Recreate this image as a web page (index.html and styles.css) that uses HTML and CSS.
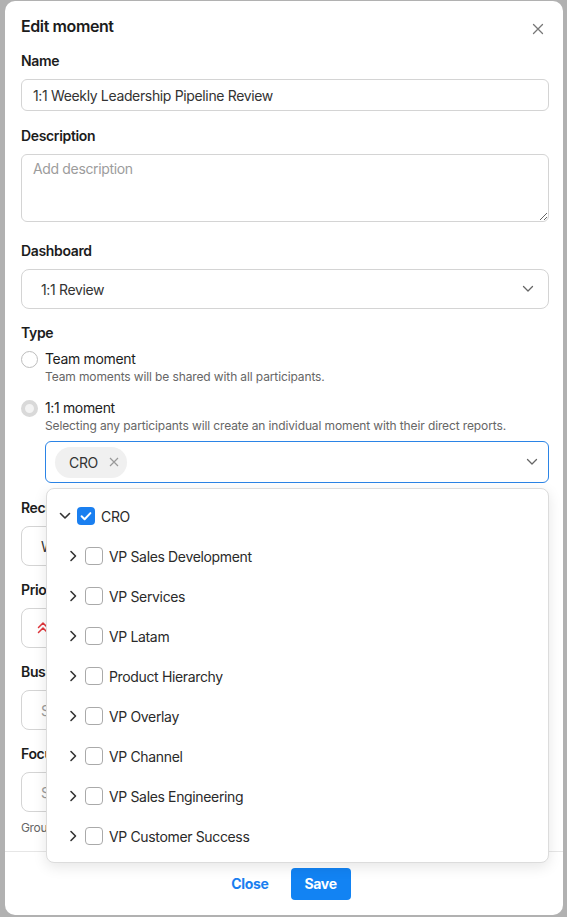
FILE: index.html
```html
<!DOCTYPE html>
<html>
<head>
<meta charset="utf-8">
<link rel="stylesheet" href="styles.css">
</head>
<body>
<div class="modal">
  <div class="content">
    <div class="header">
      <h2 class="title">Edit moment</h2>
      <span class="close"><svg width="12" height="12" viewBox="0 0 12 12"><path d="M1.5 1.5L10.5 10.5M10.5 1.5L1.5 10.5" stroke="#777" stroke-width="1.3" fill="none" stroke-linecap="round"/></svg></span>
    </div>

    <div class="field f-name">
      <div class="label">Name</div>
      <input class="input" value="1:1 Weekly Leadership Pipeline Review">
    </div>

    <div class="field f-desc">
      <div class="label">Description</div>
      <textarea class="textarea" placeholder="Add description"></textarea>
    </div>

    <div class="field f-dash">
      <div class="label">Dashboard</div>
      <div class="select">
        <span>1:1 Review</span>
        <svg class="chev" width="12" height="8" viewBox="0 0 12 8"><path d="M1.5 1.5L6 6L10.5 1.5" stroke="#666" stroke-width="1.3" fill="none" stroke-linecap="round" stroke-linejoin="round"/></svg>
      </div>
    </div>

    <div class="field f-type">
      <div class="label type-label">Type</div>
      <div class="radio-row">
        <span class="radio"></span>
        <div class="radio-text">
          <div class="radio-title">Team moment</div>
          <div class="radio-sub">Team moments will be shared with all participants.</div>
        </div>
      </div>
      <div class="radio-row second">
        <span class="radio disabled"></span>
        <div class="radio-text">
          <div class="radio-title">1:1 moment</div>
          <div class="radio-sub">Selecting any participants will create an individual moment with their direct reports.</div>
          <div class="multi-wrap">
            <div class="multi">
              <span class="chip">CRO <svg width="10" height="10" viewBox="0 0 10 10"><path d="M1 1L9 9M9 1L1 9" stroke="#999" stroke-width="1.2" fill="none"/></svg></span>
              <svg class="chev" width="12" height="8" viewBox="0 0 12 8"><path d="M1.5 1.5L6 6L10.5 1.5" stroke="#666" stroke-width="1.3" fill="none" stroke-linecap="round" stroke-linejoin="round"/></svg>
            </div>
            <div class="dropdown">
              <div class="opt root">
                <span class="tog"><svg width="12" height="8" viewBox="0 0 12 8"><path d="M1.5 1.5L6 6L10.5 1.5" stroke="#333" stroke-width="1.6" fill="none" stroke-linecap="round" stroke-linejoin="round"/></svg></span>
                <span class="cb checked"><svg width="18" height="18" viewBox="0 0 18 18"><path d="M4.6 9.3L7.6 12.2L13.4 6.1" stroke="#fff" stroke-width="2" fill="none" stroke-linecap="round" stroke-linejoin="round"/></svg></span>
                <span class="opt-text">CRO</span>
              </div>
              <div class="opt child"><span class="tog"><svg width="8" height="12" viewBox="0 0 8 12"><path d="M2 1.5L6.5 6L2 10.5" stroke="#333" stroke-width="1.6" fill="none" stroke-linecap="round" stroke-linejoin="round"/></svg></span><span class="cb"></span><span class="opt-text">VP Sales Development</span></div>
              <div class="opt child"><span class="tog"><svg width="8" height="12" viewBox="0 0 8 12"><path d="M2 1.5L6.5 6L2 10.5" stroke="#333" stroke-width="1.6" fill="none" stroke-linecap="round" stroke-linejoin="round"/></svg></span><span class="cb"></span><span class="opt-text">VP Services</span></div>
              <div class="opt child"><span class="tog"><svg width="8" height="12" viewBox="0 0 8 12"><path d="M2 1.5L6.5 6L2 10.5" stroke="#333" stroke-width="1.6" fill="none" stroke-linecap="round" stroke-linejoin="round"/></svg></span><span class="cb"></span><span class="opt-text">VP Latam</span></div>
              <div class="opt child"><span class="tog"><svg width="8" height="12" viewBox="0 0 8 12"><path d="M2 1.5L6.5 6L2 10.5" stroke="#333" stroke-width="1.6" fill="none" stroke-linecap="round" stroke-linejoin="round"/></svg></span><span class="cb"></span><span class="opt-text">Product Hierarchy</span></div>
              <div class="opt child"><span class="tog"><svg width="8" height="12" viewBox="0 0 8 12"><path d="M2 1.5L6.5 6L2 10.5" stroke="#333" stroke-width="1.6" fill="none" stroke-linecap="round" stroke-linejoin="round"/></svg></span><span class="cb"></span><span class="opt-text">VP Overlay</span></div>
              <div class="opt child"><span class="tog"><svg width="8" height="12" viewBox="0 0 8 12"><path d="M2 1.5L6.5 6L2 10.5" stroke="#333" stroke-width="1.6" fill="none" stroke-linecap="round" stroke-linejoin="round"/></svg></span><span class="cb"></span><span class="opt-text">VP Channel</span></div>
              <div class="opt child"><span class="tog"><svg width="8" height="12" viewBox="0 0 8 12"><path d="M2 1.5L6.5 6L2 10.5" stroke="#333" stroke-width="1.6" fill="none" stroke-linecap="round" stroke-linejoin="round"/></svg></span><span class="cb"></span><span class="opt-text">VP Sales Engineering</span></div>
              <div class="opt child"><span class="tog"><svg width="8" height="12" viewBox="0 0 8 12"><path d="M2 1.5L6.5 6L2 10.5" stroke="#333" stroke-width="1.6" fill="none" stroke-linecap="round" stroke-linejoin="round"/></svg></span><span class="cb"></span><span class="opt-text">VP Customer Success</span></div>
            </div>
          </div>
        </div>
      </div>
    </div>

    <div class="field f-lg">
      <div class="label">Recurrence</div>
      <div class="select"><span>W</span></div>
    </div>
    <div class="field f-lg">
      <div class="label">Priority</div>
      <div class="select"><svg class="prio" width="12" height="14" viewBox="0 0 12 14"><path d="M1.5 6.5L6 2L10.5 6.5M1.5 11.5L6 7L10.5 11.5" stroke="#e0353b" stroke-width="1.5" fill="none" stroke-linecap="round" stroke-linejoin="round"/></svg></div>
    </div>
    <div class="field f-lg">
      <div class="label">Business</div>
      <div class="select"><span class="ph">S</span></div>
    </div>
    <div class="field f-focus">
      <div class="label">Focus</div>
      <div class="select"><span class="ph">S</span></div>
    </div>
    <div class="helper">Group</div>
  </div>

  <div class="footer">
    <button class="btn btn-link">Close</button>
    <button class="btn btn-primary">Save</button>
  </div>
</div>
</body>
</html>
```

FILE: styles.css
```css
* { box-sizing: border-box; }

html, body {
  margin: 0;
  padding: 0;
}

body {
  background: #b1b1b1;
  font-family: Inter, "Noto Sans", "Liberation Sans", sans-serif;
  color: #1c1c1c;
  height: 917px;
  overflow: hidden;
  letter-spacing: -0.35px;
}

.modal {
  margin: 1px 4px 0 5px;
  width: 558px;
  height: 914px;
  background: #fff;
  border-radius: 10px;
  display: flex;
  flex-direction: column;
}

.content {
  flex: 1;
  min-height: 0;
  padding: 13px 14px 0 16px;
}

.header {
  display: flex;
  align-items: center;
  justify-content: space-between;
  margin-bottom: 13px;
}

.title {
  margin: 0;
  font-size: 16px;
  line-height: 24px;
  font-weight: 600;
  color: #1c1c1c;
  letter-spacing: -0.4px;
}

.close {
  display: flex;
  margin-top: 6px;
  margin-right: 5px;
}

.label {
  font-size: 14px;
  line-height: 20px;
  font-weight: 600;
  color: #1c1c1c;
  margin-bottom: 8px;
}

.field { margin-bottom: 15px; }
.f-desc { margin-bottom: 19px; }
.f-dash { margin-bottom: 14px; }
.f-type { margin-bottom: 15px; }
.f-lg { margin-bottom: 14px; }
.f-focus { margin-bottom: 8px; }

.input {
  display: block;
  width: 100%;
  height: 32px;
  border: 1px solid #d4d4d4;
  border-radius: 6px;
  padding: 0 11px;
  font-family: inherit;
  font-size: 14px;
  letter-spacing: -0.35px;
  color: #333;
  outline: none;
}

.textarea {
  display: block;
  width: 100%;
  height: 68px;
  border: 1px solid #d4d4d4;
  border-radius: 6px;
  padding: 3px 11px;
  font-family: inherit;
  font-size: 14px;
  letter-spacing: -0.35px;
  line-height: 22px;
  color: #333;
  outline: none;
  resize: vertical;
}

.textarea::placeholder { color: #9c9c9c; }

.select {
  height: 40px;
  border: 1px solid #d4d4d4;
  border-radius: 8px;
  padding: 0 14px 0 19px;
  display: flex;
  align-items: center;
  justify-content: space-between;
  font-size: 14px;
  color: #333;
}

.prio { margin-left: -4px; }
.select .prio:only-child { margin-right: auto; }

.ph { color: #9c9c9c; }

.type-label { margin-bottom: 6px; }

.radio-row {
  display: flex;
  align-items: flex-start;
  gap: 7px;
}

.radio-row.second { margin-top: 13px; }

.radio {
  flex: none;
  width: 17px;
  height: 17px;
  border-radius: 50%;
  border: 1px solid #bdbdbd;
  background: #fff;
  margin-top: 2px;
}

.radio.disabled {
  border: 4.5px solid #d9d9d9;
  background: #f3f3f3;
}

.radio-text { flex: 1; min-width: 0; }

.radio-title {
  font-size: 14px;
  line-height: 20px;
  color: #1c1c1c;
}

.radio-sub {
  font-size: 12px;
  line-height: 16px;
  color: #666;
  letter-spacing: -0.12px;
}

.multi-wrap {
  position: relative;
  margin-top: 7px;
}

.multi {
  height: 42px;
  border: 1px solid #2b84e6;
  border-radius: 6px;
  display: flex;
  align-items: center;
  justify-content: space-between;
  padding: 0 10px 0 9px;
}

.chip {
  display: inline-flex;
  align-items: center;
  gap: 11px;
  height: 31px;
  padding: 0 8px 0 14px;
  background: #f0f0f0;
  border-radius: 16px;
  font-size: 14px;
  color: #333;
}

.dropdown {
  position: absolute;
  top: calc(100% + 5px);
  left: 1px;
  right: 0;
  z-index: 10;
  background: #fff;
  border: 1px solid #dcdcdc;
  border-radius: 8px;
  box-shadow: 0 4px 14px rgba(0, 0, 0, 0.10);
  padding: 7px 0 6px 10px;
}

.opt {
  height: 40px;
  display: flex;
  align-items: center;
  font-size: 14px;
  color: #2a2a2a;
}

.opt.child { padding-left: 8px; }

.tog {
  width: 16px;
  display: flex;
  justify-content: center;
  align-items: center;
  margin-right: 4px;
}

.cb {
  width: 18px;
  height: 18px;
  border: 1.5px solid #aaaaaa;
  border-radius: 4px;
  margin-right: 6px;
  display: flex;
}

.cb.checked {
  border: none;
  background: #1a7ff0;
}

.helper {
  font-size: 12px;
  line-height: 16px;
  color: #666;
}

.footer {
  flex: none;
  height: 64px;
  border-top: 1px solid #e6e6e6;
  display: flex;
  justify-content: center;
  align-items: center;
  gap: 8px;
}

.btn {
  height: 32px;
  padding: 0 14px;
  font-family: inherit;
  font-size: 14px;
  font-weight: 700;
  letter-spacing: -0.35px;
  border: none;
  border-radius: 4px;
  cursor: pointer;
}

.btn-link {
  background: transparent;
  color: #1a7ff0;
}

.btn-primary {
  background: #1283f3;
  color: #fff;
}
```
